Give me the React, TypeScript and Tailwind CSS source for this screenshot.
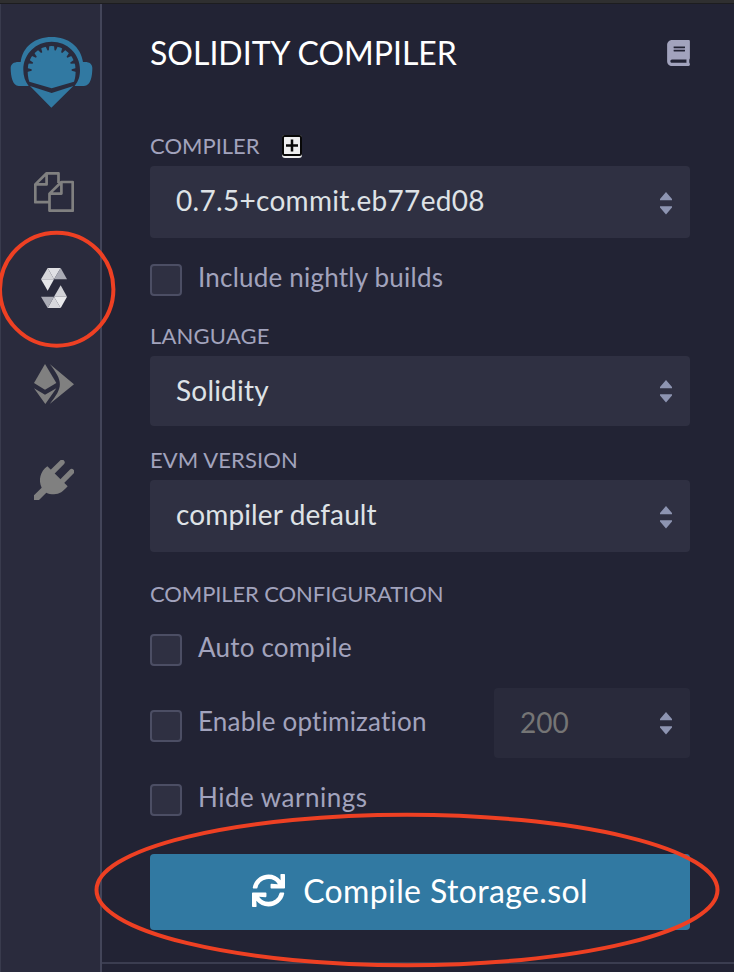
import React from "react";
import { FaBook, FaSync } from "react-icons/fa";

function Logo() {
  const teeth = [0, 20, 40, 60, 80, 100, 120, 140, 160, 180];
  return (
    <svg className="block h-[72px] w-[84px]" viewBox="30 108 252 216">
      <g fill="#3179a2">
        <path d="M62 186C68 140 105 111 155 111S242 140 249 186C266 184 277 190 277 204C277 228 272 258 252 258L224 258C236 243 240 228 240 210C240 160 201 125 155 125S70 160 70 210C70 228 75 243 86 258H56C38 258 32 228 32 204C32 190 44 184 62 186Z" />
        <path d="M88 245C84 235 83 222 83 210A72 72 0 0 1 227 210C227 222 226 235 222 245L155 265Z" />
        <path d="M90 258L155 279L220 258L154 323Z" />
      </g>
      <g fill="#2a2b3d">
        {teeth.map((a) => (
          <path key={a} d="M229 204L215 208V212L229 216Z" transform={`rotate(${-a} 155 210)`} />
        ))}
      </g>
    </svg>
  );
}

function FilesIcon() {
  return (
    <svg className="block size-10" viewBox="34 172 40 40" fill="none" stroke="#808080" strokeWidth="2.7" strokeLinejoin="round">
      <path d="M49 202.2H35.3V184.4L46.6 173.3H58.5V183M46.6 173.3V184.4H35.3" />
      <path d="M49.5 193.6L61.4 182H72.7V210.7H49.5ZM61.4 182V193.6H49.5" />
    </svg>
  );
}

function SolidityIcon() {
  return (
    <svg className="block h-10 w-[26px]" viewBox="123 354 78 120">
      <path fill="#e0e0e4" d="M143 354H182L162 388Z" />
      <path fill="#d6d6da" d="M143 354L123 388H162Z" />
      <path fill="#e6e6e9" d="M123 388H162L143 422Z" />
      <path fill="#aaabb5" d="M182 354L201 388H162Z" />
      <path fill="#d2d2d7" d="M182 406L201 440H162Z" />
      <path fill="#e9e9ec" d="M201 440L182 474L162 440Z" />
      <path fill="#d7d7dc" d="M162 440L182 474H143Z" />
      <path fill="#aaabb5" d="M123 440H162L143 474Z" />
    </svg>
  );
}

function DeployIcon() {
  return (
    <svg className="block size-10" viewBox="102 42 120 120" fill="#808080">
      <path d="M135 42L169 99L135 119L102 99Z" />
      <path d="M102 115L135 134L169 115L136 162Z" />
      <path d="M149 42L222 103L149 162C190 112 190 94 149 42Z" />
    </svg>
  );
}

function PlugIcon() {
  return (
    <svg className="block size-10" viewBox="102 330 120 120" fill="#808080">
      <path d="M142 349L203 409C190 424 178 433 162 433C153 433 145 431 139 428L117 450H102V436L125 413C114 390 121 364 142 349Z" />
      <path fill="none" stroke="#808080" strokeWidth="16" strokeLinecap="round" d="M157 366L186 337M186 394L215 365" />
    </svg>
  );
}

function Arrows() {
  return (
    <svg className="block h-[23px] w-3" viewBox="0 0 12 23" fill="#8d94b1">
      <path d="M6 0L12 7V8.3H0V7ZM0 14.3H12V15.6L6 22.6L0 15.6Z" />
    </svg>
  );
}

function Select({ text, className }: { text: string; className: string }) {
  return (
    <div className={`flex items-center justify-between rounded-[4px] bg-[#2f3042] pl-[26px] pr-[18px] text-[28px] text-[#dee2e6] ${className}`}>
      <span className="whitespace-pre">{text}</span>
      <Arrows />
    </div>
  );
}

function Check({
  text,
  className = "",
  textClass = "pb-[7px] tracking-[0.22px]",
}: {
  text: string;
  className?: string;
  textClass?: string;
}) {
  return (
    <label className={`flex h-8 items-center gap-4 text-[26px] text-[#a2a3bd] ${className}`}>
      <span className="size-8 shrink-0 rounded-[4px] border-2 border-[#4c4e64] bg-[#2f3042]" />
      <span className={`whitespace-pre ${textClass}`}>{text}</span>
    </label>
  );
}

export default function App() {
  return (
    <div className="relative flex h-[972px] w-[734px] flex-col overflow-hidden bg-[#222334] font-['Lato','Open_Sans',sans-serif] leading-none [font-variant-ligatures:none]">
      <div className="h-1 shrink-0 border-b border-[#1d1d1f] bg-[#2f2f30]" />
      <div className="flex min-h-0 flex-1">
        <nav className="flex w-[102px] shrink-0 flex-col border-l border-r-2 border-l-[#393b4d] border-r-[#434559] bg-[#2a2b3d]">
          <div className="ml-[9px] mt-8"><Logo /></div>
          <div className="ml-[33px] mt-16"><FilesIcon /></div>
          <div className="ml-10 mt-14"><SolidityIcon /></div>
          <div className="ml-[33px] mt-14"><DeployIcon /></div>
          <div className="ml-[33px] mt-14"><PlugIcon /></div>
        </nav>
        <main className="flex flex-1 flex-col">
          <div className="flex h-[960px] shrink-0 flex-col border-b-2 border-[#3b3d50] pl-12 pr-11">
            <header className="flex h-[98px] items-center justify-between text-white">
              <h1 className="text-[32px]">SOLIDITY COMPILER</h1>
              <FaBook className="h-[26px] w-[23px] text-[#a2a3bd]" />
            </header>
            <div className="mt-6 flex h-10 items-center text-[22px] text-[#a2a3bd]">
              <span className="w-[132px]">COMPILER</span>
              <span className="flex h-[23px] w-5 flex-col rounded-[3px] bg-[#eeeeef]">
                <svg className="block h-[21px] w-5" viewBox="0 0 20 21" fill="none" stroke="#080808">
                  <rect x="1" y="1" width="18" height="19" rx="1.5" strokeWidth="2" />
                  <path d="M10 4.5V16.5M4 10.5H16" strokeWidth="2.5" />
                </svg>
              </span>
            </div>
            <Select className="h-[72px] pb-1 tracking-[0.3px] [&>svg]:translate-y-[3px]" text="0.7.5+commit.eb77ed08" />
            <Check className="mt-[26px]" text="Include nightly builds" />
            <div className="mb-1.5 mt-[26px] flex h-7 items-center text-[22px] tracking-[0.2px] text-[#a2a3bd]">LANGUAGE</div>
            <Select className="h-[70px] pb-[2px] tracking-[0.2px] [&>svg]:translate-y-px" text="Solidity" />
            <div className="mb-1.5 mt-5 flex h-7 items-center text-[22px] tracking-[0.1px] text-[#a2a3bd]">EVM VERSION</div>
            <Select className="h-[72px] pb-1 tracking-[0.12px] [&>svg]:translate-y-[3px]" text="compiler default" />
            <div className="mt-7 flex h-7 items-center text-[22px] tracking-[-0.1px] text-[#a2a3bd]">COMPILER CONFIGURATION</div>
            <Check className="mt-[26px]" text="Auto compile" textClass="pb-[7px] tracking-[0.2px]" />
            <div className="mt-[22px] flex h-[70px] items-center justify-between">
              <Check className="mt-1.5" text="Enable optimization" textClass="pb-[11px] tracking-[0.2px]" />
              <div className="flex h-[70px] w-[196px] items-center justify-between rounded-[4px] bg-[#292a3b] pl-[26px] pr-[18px] text-[28px] text-[#757575]">
                <span className="pb-[2px]">200</span>
                <Arrows />
              </div>
            </div>
            <Check className="mt-[26px]" text="Hide warnings" textClass="pb-[7px] tracking-[0.5px]" />
            <button className="mt-[38px] flex h-[76px] items-center justify-center gap-[18px] rounded-[4px] bg-[#3179a2] text-[32px] tracking-[0.37px] text-white">
              <FaSync className="mb-1 size-[33px]" />
              <span className="pb-[2px]">Compile Storage.sol</span>
            </button>
          </div>
        </main>
      </div>
      <svg className="pointer-events-none absolute inset-0" width="734" height="972" fill="none" stroke="#ee4023" strokeWidth="4">
        <ellipse cx="56.7" cy="289.2" rx="56.7" ry="56.5" />
        <ellipse cx="407" cy="890" rx="310.5" ry="75.2" />
      </svg>
    </div>
  );
}
